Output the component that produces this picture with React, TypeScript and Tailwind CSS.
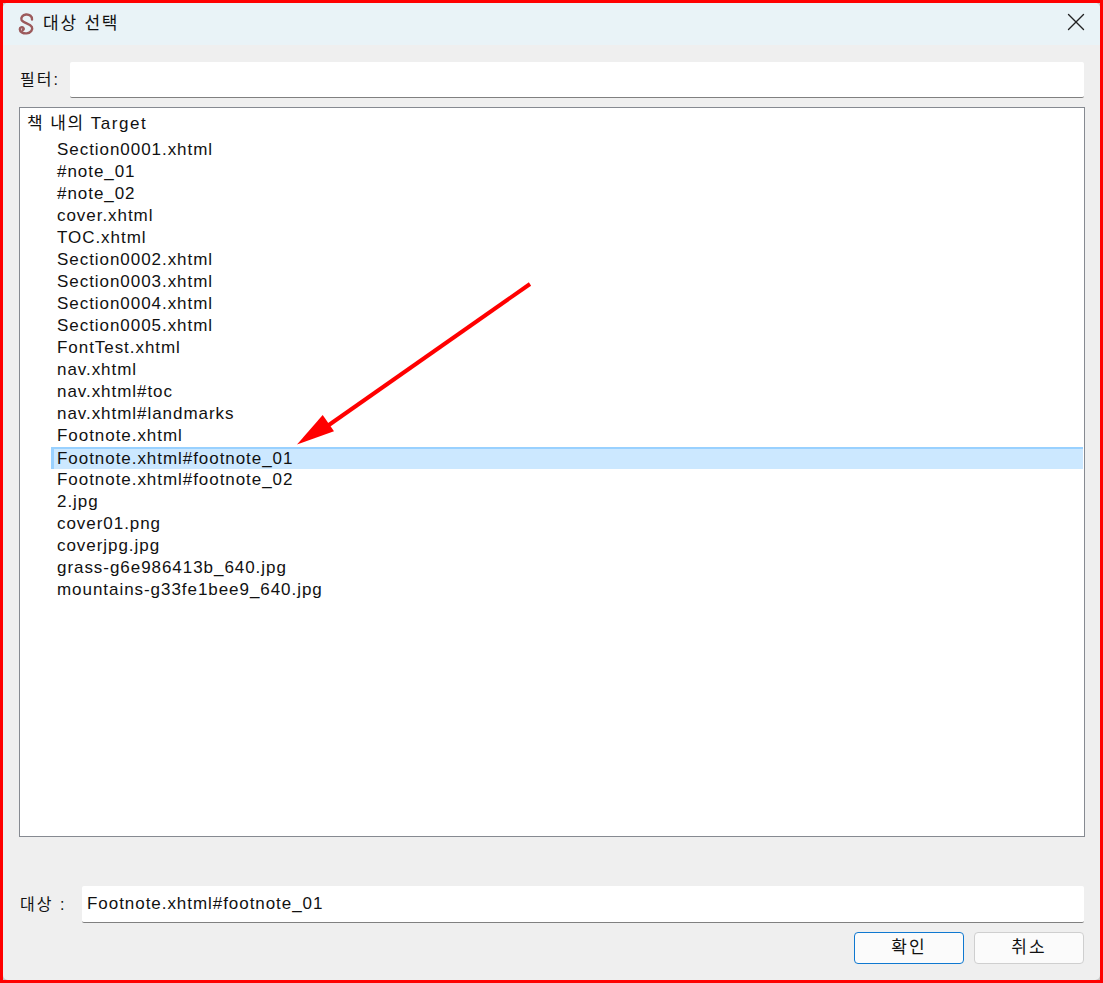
import { X } from "lucide-react";

const targets = [
  "Section0001.xhtml",
  "#note_01",
  "#note_02",
  "cover.xhtml",
  "TOC.xhtml",
  "Section0002.xhtml",
  "Section0003.xhtml",
  "Section0004.xhtml",
  "Section0005.xhtml",
  "FontTest.xhtml",
  "nav.xhtml",
  "nav.xhtml#toc",
  "nav.xhtml#landmarks",
  "Footnote.xhtml",
  "Footnote.xhtml#footnote_01",
  "Footnote.xhtml#footnote_02",
  "2.jpg",
  "cover01.png",
  "coverjpg.jpg",
  "grass-g6e986413b_640.jpg",
  "mountains-g33fe1bee9_640.jpg",
];

const selected = "Footnote.xhtml#footnote_01";

function Logo() {
  return (
    <svg className="mr-[8px] shrink-0" width="17" height="22" viewBox="0 0 17 22" fill="none">
      <path
        d="M14 6.5 C14.5 3.5 11.5 1.2 8 1.5 C4.5 1.8 2.6 4.5 3.6 7 C5 10.2 12 10.6 13.8 13.8 C15.2 16.6 12.8 20.2 8.6 20.4 C5 20.6 1.8 18.8 1.8 16.2 C1.8 14.4 4.2 13.6 5.4 15 C6.2 16 5.6 17 4.8 17"
        stroke="#9c5a5c"
        strokeWidth="2.4"
        strokeLinecap="round"
      />
    </svg>
  );
}

export default function App() {
  return (
    <div className="relative h-[983px] w-[1103px] overflow-hidden border-[3px] border-[#ff0000] bg-[#c9c9c9] font-['Liberation_Sans','Noto_Sans_CJK_KR',sans-serif] text-[17px] tracking-[0.95px] text-[#111]">
      <div className="flex h-full flex-col overflow-hidden rounded-[5px] bg-[#efefef]">
        <header className="flex h-[42px] shrink-0 items-center bg-[#e9f3f7] pl-[15px] pr-[9px]">
          <Logo />
          <span className="text-[17px] tracking-[1.8px]">대상 선택</span>
          <X className="mb-[4px] ml-auto size-[30px] text-[#222]" strokeWidth={1.1} />
        </header>

        <div className="mt-[17px] flex items-center pl-[17px] pr-[16px]">
          <label className="w-[50px] shrink-0 text-[16px] tracking-[2px]">필터:</label>
          <input className="h-[36px] flex-1 rounded-[2px] border-b border-[#808080] bg-white outline-none" />
        </div>

        <div className="ml-[16px] mr-[15px] mt-[9px] h-[730px] shrink-0 border border-[#868a91] bg-white pr-px pt-[5px]">
          <div className="h-[22px] pl-[7px] leading-[22px] tracking-[1.5px]">책 내의 Target</div>
          <ul className="mt-[4px] pl-[31px]">
            {targets.map((name) =>
              name === selected ? (
                <li
                  key={name}
                  className="h-[22px] border-l-[3px] border-t-2 border-[#99d1ff] bg-[#cce8ff] pl-[3px] leading-[20px]"
                >
                  {name}
                </li>
              ) : (
                <li key={name} className="h-[22px] pl-[6px] leading-[22px]">
                  {name}
                </li>
              ),
            )}
          </ul>
        </div>

        <div className="mt-[49px] flex items-center pl-[17px] pr-[16px]">
          <label className="w-[62px] shrink-0 text-[16px] tracking-[2px]">대상 :</label>
          <input
            readOnly
            value={selected}
            className="h-[37px] flex-1 rounded-[2px] border-b border-[#808080] bg-white pl-[5px] tracking-[0.95px] outline-none"
          />
        </div>

        <div className="mt-[9px] flex justify-end gap-[10px] pr-[16px]">
          <button className="h-[32px] w-[110px] rounded-[4px] border-[1.5px] border-[#0f78d0] bg-[#fbfbfb] text-[17px] tracking-[2px]">
            확인
          </button>
          <button className="h-[32px] w-[110px] rounded-[4px] border-[1.5px] border-[#cfcfcf] bg-[#fbfbfb] text-[17px] tracking-[2px]">
            취소
          </button>
        </div>
      </div>

      <svg
        className="pointer-events-none absolute left-[-3px] top-[-3px]"
        width="1103"
        height="983"
        viewBox="0 0 1103 983"
      >
        <line x1="530" y1="284" x2="326" y2="427" stroke="#ff0000" strokeWidth="4" />
        <polygon points="297,444.5 322.7,415 334,431.3" fill="#ff0000" />
      </svg>
    </div>
  );
}
